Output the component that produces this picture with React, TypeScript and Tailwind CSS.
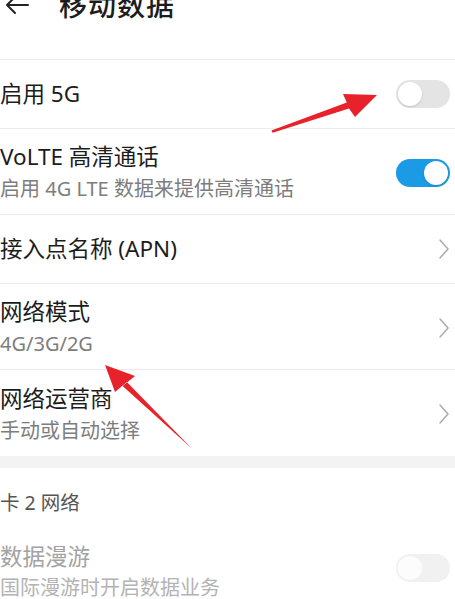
import React from "react";

const font = { fontFamily: '"Noto Sans", "Noto Sans CJK SC", sans-serif' };

function Toggle({ on, disabled }: { on?: boolean; disabled?: boolean }) {
    const track = on ? "bg-[#1b9be6] justify-end" : disabled ? "bg-[#f1f1f1] justify-start" : "bg-[#e4e4e4] justify-start";
    return (
        <div className={`w-[54px] h-[28px] rounded-full flex items-center px-[2px] ${track}`}>
            <div className={`w-[24px] h-[24px] rounded-full ${disabled ? "bg-[#fcfcfc]" : "bg-white shadow-[0_1px_2px_rgba(0,0,0,0.15)]"}`} />
        </div>
    );
}

function Chevron() {
    return (
        <svg width="12" height="22" viewBox="0 0 12 22" fill="none">
            <path d="M2 2 L10 11 L2 20" stroke="#ababab" strokeWidth="1.5" strokeLinecap="round" strokeLinejoin="round" />
        </svg>
    );
}

function Row({ title, sub, right, border = true }: { title: string; sub?: string; right: React.ReactNode; border?: boolean }) {
    return (
        <div className={`flex items-center justify-between pr-[4px] ${border ? "border-b border-[#ebebeb]" : ""} ${sub ? "h-[86px] pt-[2px]" : "h-[69px]"}`}>
            <div className="flex flex-col gap-[3px]">
                <div className="text-[22.5px] leading-[30px] text-[#1c1c1c]">{title}</div>
                {sub && <div className="text-[20px] leading-[28px] text-[#7d7d7d]">{sub}</div>}
            </div>
            <div className="pr-[1px]">{right}</div>
        </div>
    );
}

export default function App() {
    return (
        <div className="relative w-[455px] h-[599px] overflow-hidden bg-white" style={font}>
            <div className="flex flex-col h-[60px] border-b border-[#ebebeb]">
                <div className="-mt-[13px] h-[36px] flex items-center gap-[30px] pl-[5px]">
                    <svg width="24" height="20" viewBox="0 0 24 20" fill="none">
                        <path d="M23 10 H2 M10 2 L2 10 L10 18" stroke="#222" strokeWidth="2" strokeLinecap="round" strokeLinejoin="round" />
                    </svg>
                    <div className="text-[28px] leading-[36px] text-[#1c1c1c] font-medium tracking-[1px]">移动数据</div>
                </div>
            </div>

            <Row title="启用 5G" right={<Toggle />} />
            <Row title="VoLTE 高清通话" sub="启用 4G LTE 数据来提供高清通话" right={<Toggle on />} />
            <Row title="接入点名称 (APN)" right={<Chevron />} />
            <Row title="网络模式" sub="4G/3G/2G" right={<Chevron />} />
            <Row title="网络运营商" sub="手动或自动选择" right={<Chevron />} border={false} />

            <div className="h-[12px] bg-[#f3f3f3]" />

            <div className="pt-[21px] text-[19.5px] leading-[28px] text-[#555]">卡 2 网络</div>
            <div className="flex items-center justify-between pr-[5px] pt-[25px]">
                <div className="flex flex-col gap-[2px]">
                    <div className="text-[22.5px] leading-[30px] text-[#a3a3a3]">数据漫游</div>
                    <div className="text-[20px] leading-[28px] text-[#b3b3b3]">国际漫游时开启数据业务</div>
                </div>
                <div className="-mt-[8px]">
                    <Toggle disabled />
                </div>
            </div>

            <svg className="absolute inset-0 pointer-events-none" width="455" height="599" viewBox="0 0 455 599">
                <polygon
                    points="272.6,132.8 349,108.5 355,117 377,95 343,94 346.8,102.4 271.4,130.4"
                    fill="#e8222a"
                />
                <polygon
                    points="190.9,447.6 126.8,382 115,392 105,365 135,376 122.6,386 189.3,446.2"
                    fill="#e8222a"
                />
            </svg>
        </div>
    );
}
